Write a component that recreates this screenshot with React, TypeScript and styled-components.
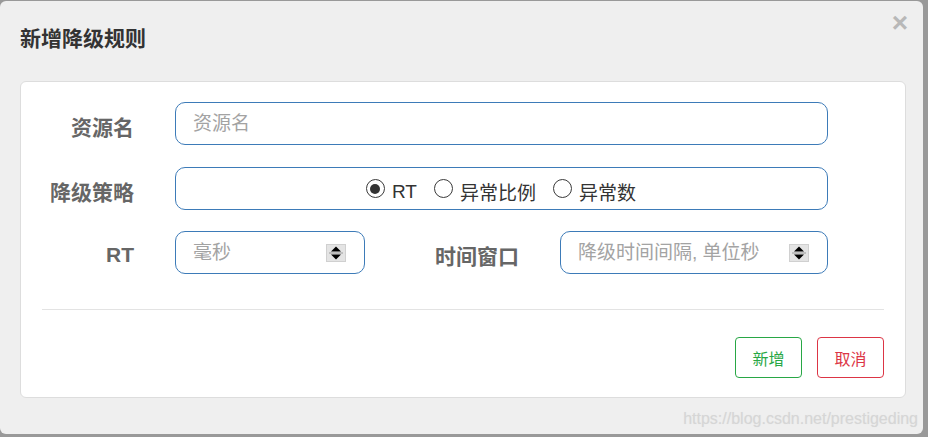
import React from 'react'
import styled, { createGlobalStyle } from 'styled-components';


/* Global */
const GlobalStyle = createGlobalStyle`
    html, body {
        margin: 0;
        padding: 0;
        background: #999999;
    }

    body {
        font-family: "Liberation Sans", "Noto Sans CJK SC", sans-serif;
    }
`;


/* Styled Components */
const Modal = styled.div`
    position: relative;
    margin-top: 1px;
    width: 923px;
    height: 433px;

    background: #efefef;
    border-radius: 6px;

    display: flex;
    flex-flow: column nowrap;
`;

    const Header = styled.div`
        height: 80px;
        padding: 0 15px 0 20px;

        display: flex;
        flex-flow: row nowrap;
        align-items: flex-start;
        justify-content: space-between;
    `;

        const Title = styled.div`
            margin-top: 24px;
            line-height: 28px;

            font-size: 21px;
            font-weight: bold;
            color: #333;
        `;

        const CloseButton = styled.div`
            margin-top: 8px;
            line-height: 28px;

            font-size: 28px;
            font-weight: bold;
            color: #b8b8b8;

            cursor: pointer;
        `;

    const Card = styled.div`
        margin-left: 20px;
        width: 886px;
        box-sizing: border-box;
        padding: 20px 21px 19px 21px;

        background: #fff;
        border: 1px solid #dddddd;
        border-radius: 6px;

        display: flex;
        flex-flow: column nowrap;
    `;

        const FormRow = styled.div<{ $gap?: number }>`
            margin-top: ${p => p.$gap ?? 0}px;
            width: 786px;
            flex-shrink: 0;

            display: flex;
            flex-flow: row nowrap;
            align-items: center;
            gap: 41px;
        `;

            const Label = styled.div<{ $width?: number }>`
                ${p => p.$width ? `width: ${p.$width}px;` : 'flex: 1;'}
                margin-top: 5px;

                text-align: right;
                font-size: 21px;
                font-weight: bold;
                color: #666;
            `;

            const Field = styled.div<{ $width?: number }>`
                ${p => p.$width ? `width: ${p.$width}px;` : 'flex: 1;'}
                height: 43px;
                box-sizing: border-box;
                padding: 0 18px 0 17px;

                border: 1px solid #3d7bb8;
                border-radius: 10px;

                display: flex;
                flex-flow: row nowrap;
                align-items: center;
            `;

                const Input = styled.input`
                    flex: 1;
                    min-width: 0;
                    padding: 0;

                    border: none;
                    outline: none;
                    background: transparent;

                    font-family: "Liberation Sans", "Noto Sans CJK SC", sans-serif;
                    font-size: 19px;
                    color: #333;

                    &::placeholder {
                        color: #a3a3a3;
                    }
                `;

                const RadioGroup = styled.div`
                    flex: 1;
                    margin-top: 6px;

                    display: flex;
                    flex-flow: row nowrap;
                    align-items: center;
                    justify-content: center;
                    gap: 17px;
                `;

                    const RadioItem = styled.label`
                        display: flex;
                        flex-flow: row nowrap;
                        align-items: center;
                        gap: 7px;

                        font-size: 19px;
                        color: #333;

                        cursor: pointer;
                    `;

                        const RadioCircle = styled.span<{ $checked?: boolean }>`
                            margin-top: -6px;
                            width: 19px;
                            height: 19px;
                            box-sizing: border-box;

                            border: 1.5px solid #3a3a3a;
                            border-radius: 50%;

                            display: flex;
                            align-items: center;
                            justify-content: center;

                            &::after {
                                content: '';
                                width: 10px;
                                height: 10px;
                                border-radius: 50%;
                                background: ${p => p.$checked ? '#333' : 'transparent'};
                            }
                        `;

        const Divider = styled.div`
            margin-top: 35px;
            height: 1px;
            flex-shrink: 0;
            background: #e3e3e3;
        `;

        const Footer = styled.div`
            margin-top: 27px;

            display: flex;
            flex-flow: row nowrap;
            justify-content: flex-end;
            gap: 15px;
        `;

            const Button = styled.button<{ $tone: string }>`
                width: 67px;
                height: 41px;
                padding: 0;

                background: #fff;
                border: 1px solid ${p => p.$tone};
                border-radius: 4px;

                font-family: "Liberation Sans", "Noto Sans CJK SC", sans-serif;
                font-size: 16px;
                color: ${p => p.$tone};

                cursor: pointer;
            `;

    const Watermark = styled.div`
        position: absolute;
        right: 5px;
        bottom: 6px;

        font-family: "Liberation Sans", sans-serif;
        font-size: 16px;
        color: #d6d6d6;
        text-shadow: 0 0 1px #e2e2e2;
    `;


/* Spinner icon */
function Spinner () {
    return (
        <svg width="20" height="18" viewBox="0 0 20 18">
            <rect x="0.5" y="0.5" width="19" height="17" fill="#e4e4e4" stroke="#d0d0d0" />
            <line x1="3" y1="9" x2="17" y2="9" stroke="#9a9a9a" strokeWidth="1" />
            <polygon points="10,2.5 15,7.5 5,7.5" fill="#000" />
            <polygon points="5,10.5 15,10.5 10,15.5" fill="#000" />
        </svg>
    )
}


/* React Component */
function App () {
    return (
        <>
            <GlobalStyle />
            <Modal>
                <Header>
                    <Title>新增降级规则</Title>
                    <CloseButton>×</CloseButton>
                </Header>

                <Card>
                    <FormRow>
                        <Label $width={92}>资源名</Label>
                        <Field>
                            <Input placeholder="资源名" />
                        </Field>
                    </FormRow>

                    <FormRow $gap={22}>
                        <Label $width={92}>降级策略</Label>
                        <Field>
                            <RadioGroup>
                                <RadioItem><RadioCircle $checked />RT</RadioItem>
                                <RadioItem><RadioCircle />异常比例</RadioItem>
                                <RadioItem><RadioCircle />异常数</RadioItem>
                            </RadioGroup>
                        </Field>
                    </FormRow>

                    <FormRow $gap={21}>
                        <Label $width={92}>RT</Label>
                        <Field $width={190}>
                            <Input placeholder="毫秒" />
                            <Spinner />
                        </Field>
                        <Label>时间窗口</Label>
                        <Field $width={268}>
                            <Input placeholder="降级时间间隔, 单位秒" />
                            <Spinner />
                        </Field>
                    </FormRow>

                    <Divider />

                    <Footer>
                        <Button $tone="#28a745">新增</Button>
                        <Button $tone="#dc3545">取消</Button>
                    </Footer>
                </Card>

                <Watermark>https://blog.csdn.net/prestigeding</Watermark>
            </Modal>
        </>
    )
}


export default App;
